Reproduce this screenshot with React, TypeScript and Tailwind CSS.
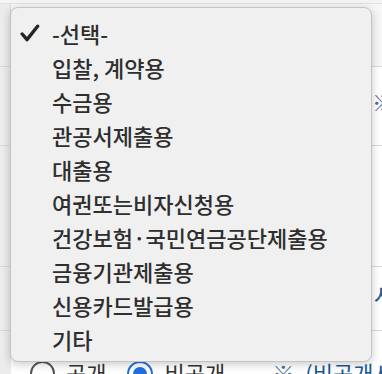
import React from 'react';

const options = [
  '-선택-',
  '입찰, 계약용',
  '수금용',
  '관공서제출용',
  '대출용',
  '여권또는비자신청용',
  '건강보험·국민연금공단제출용',
  '금융기관제출용',
  '신용카드발급용',
  '기타',
];

const font = { fontFamily: '"Noto Sans CJK KR", "Noto Sans", sans-serif' };

export default function App() {
  return (
    <div className="relative h-[374px] w-[382px] overflow-hidden bg-white" style={font}>
      {/* page behind the menu */}
      <div className="flex h-full flex-col">
        <div className="h-[4px] shrink-0 border-b border-[#e2e2e2] bg-[#f4f4f4]" />
        <div className="flex h-[63px] shrink-0 border-b border-[#d9d9d9]">
          <div className="w-[11px] border-r border-[#dedede] bg-[#ececec]" />
          <div className="flex-1 bg-[#f7f7f7]" />
        </div>
        <div className="flex h-[79px] shrink-0 border-b border-[#d9d9d9]">
          <div className="w-[11px] bg-[#ececec]" />
          <div className="flex flex-1 items-center justify-end bg-white pb-[10px]">
            <span className="mr-[-12px] text-[22px] leading-none text-[#4a6f9c]">※</span>
          </div>
        </div>
        <div className="flex h-[121px] shrink-0 border-b border-[#d9d9d9]">
          <div className="w-[11px] bg-[#ececec]" />
          <div className="flex-1 bg-white" />
        </div>
        <div className="flex h-[64px] shrink-0 border-b border-[#d9d9d9]">
          <div className="w-[11px] bg-[#ececec]" />
          <div className="flex flex-1 items-center justify-end bg-white pb-[10px]">
            <span className="mr-[-12px] text-[22px] leading-none text-[#1b5b93]">시</span>
          </div>
        </div>
        <div className="flex min-h-0 flex-1 overflow-hidden">
          <div className="w-[11px] shrink-0 bg-[#ececec]" />
          <div className="flex flex-1 items-start gap-[11px] whitespace-nowrap bg-white pl-[19px] pt-[30px] text-[22px] leading-none text-[#333]">
            <span className="h-[25px] w-[25px] shrink-0 rounded-full border-2 border-[#555]" />
            <span className="shrink-0">공개</span>
            <span className="ml-[10px] flex h-[26px] w-[26px] shrink-0 items-center justify-center rounded-full border-2 border-[#1f6fe0]">
              <span className="h-[14px] w-[14px] rounded-full bg-[#1f6fe0]" />
            </span>
            <span className="shrink-0">비공개</span>
            <span className="ml-[36px] shrink-0 text-[#4a6f9c]">※</span>
            <span className="shrink-0 text-[#1b5b93]">(비공개시</span>
          </div>
        </div>
      </div>

      {/* open select menu */}
      <div className="absolute left-[10px] top-[7px] h-[355px] w-[362px] rounded-[8px] border border-[#c4c4c4] bg-[#f0f0f0] pb-[6px] pt-[8px] shadow-[0_2px_10px_rgba(0,0,0,0.22)]">
        <ul className="flex flex-col">
          {options.map((opt, i) => (
            <li key={opt} className="flex h-[34px] items-center">
              <span className="flex w-[41px] shrink-0 pl-[9px]">
                {i === 0 && (
                  <svg width="20" height="18" viewBox="0 0 20 18">
                    <path d="M2.2 10 L7 15.6 L17.6 2.2" fill="none" stroke="#262626" strokeWidth="3.4" strokeLinecap="round" strokeLinejoin="round" />
                  </svg>
                )}
              </span>
              <span className="whitespace-nowrap text-[22px] font-medium leading-none text-[#2e2e2e]">{opt}</span>
            </li>
          ))}
        </ul>
      </div>
    </div>
  );
}
